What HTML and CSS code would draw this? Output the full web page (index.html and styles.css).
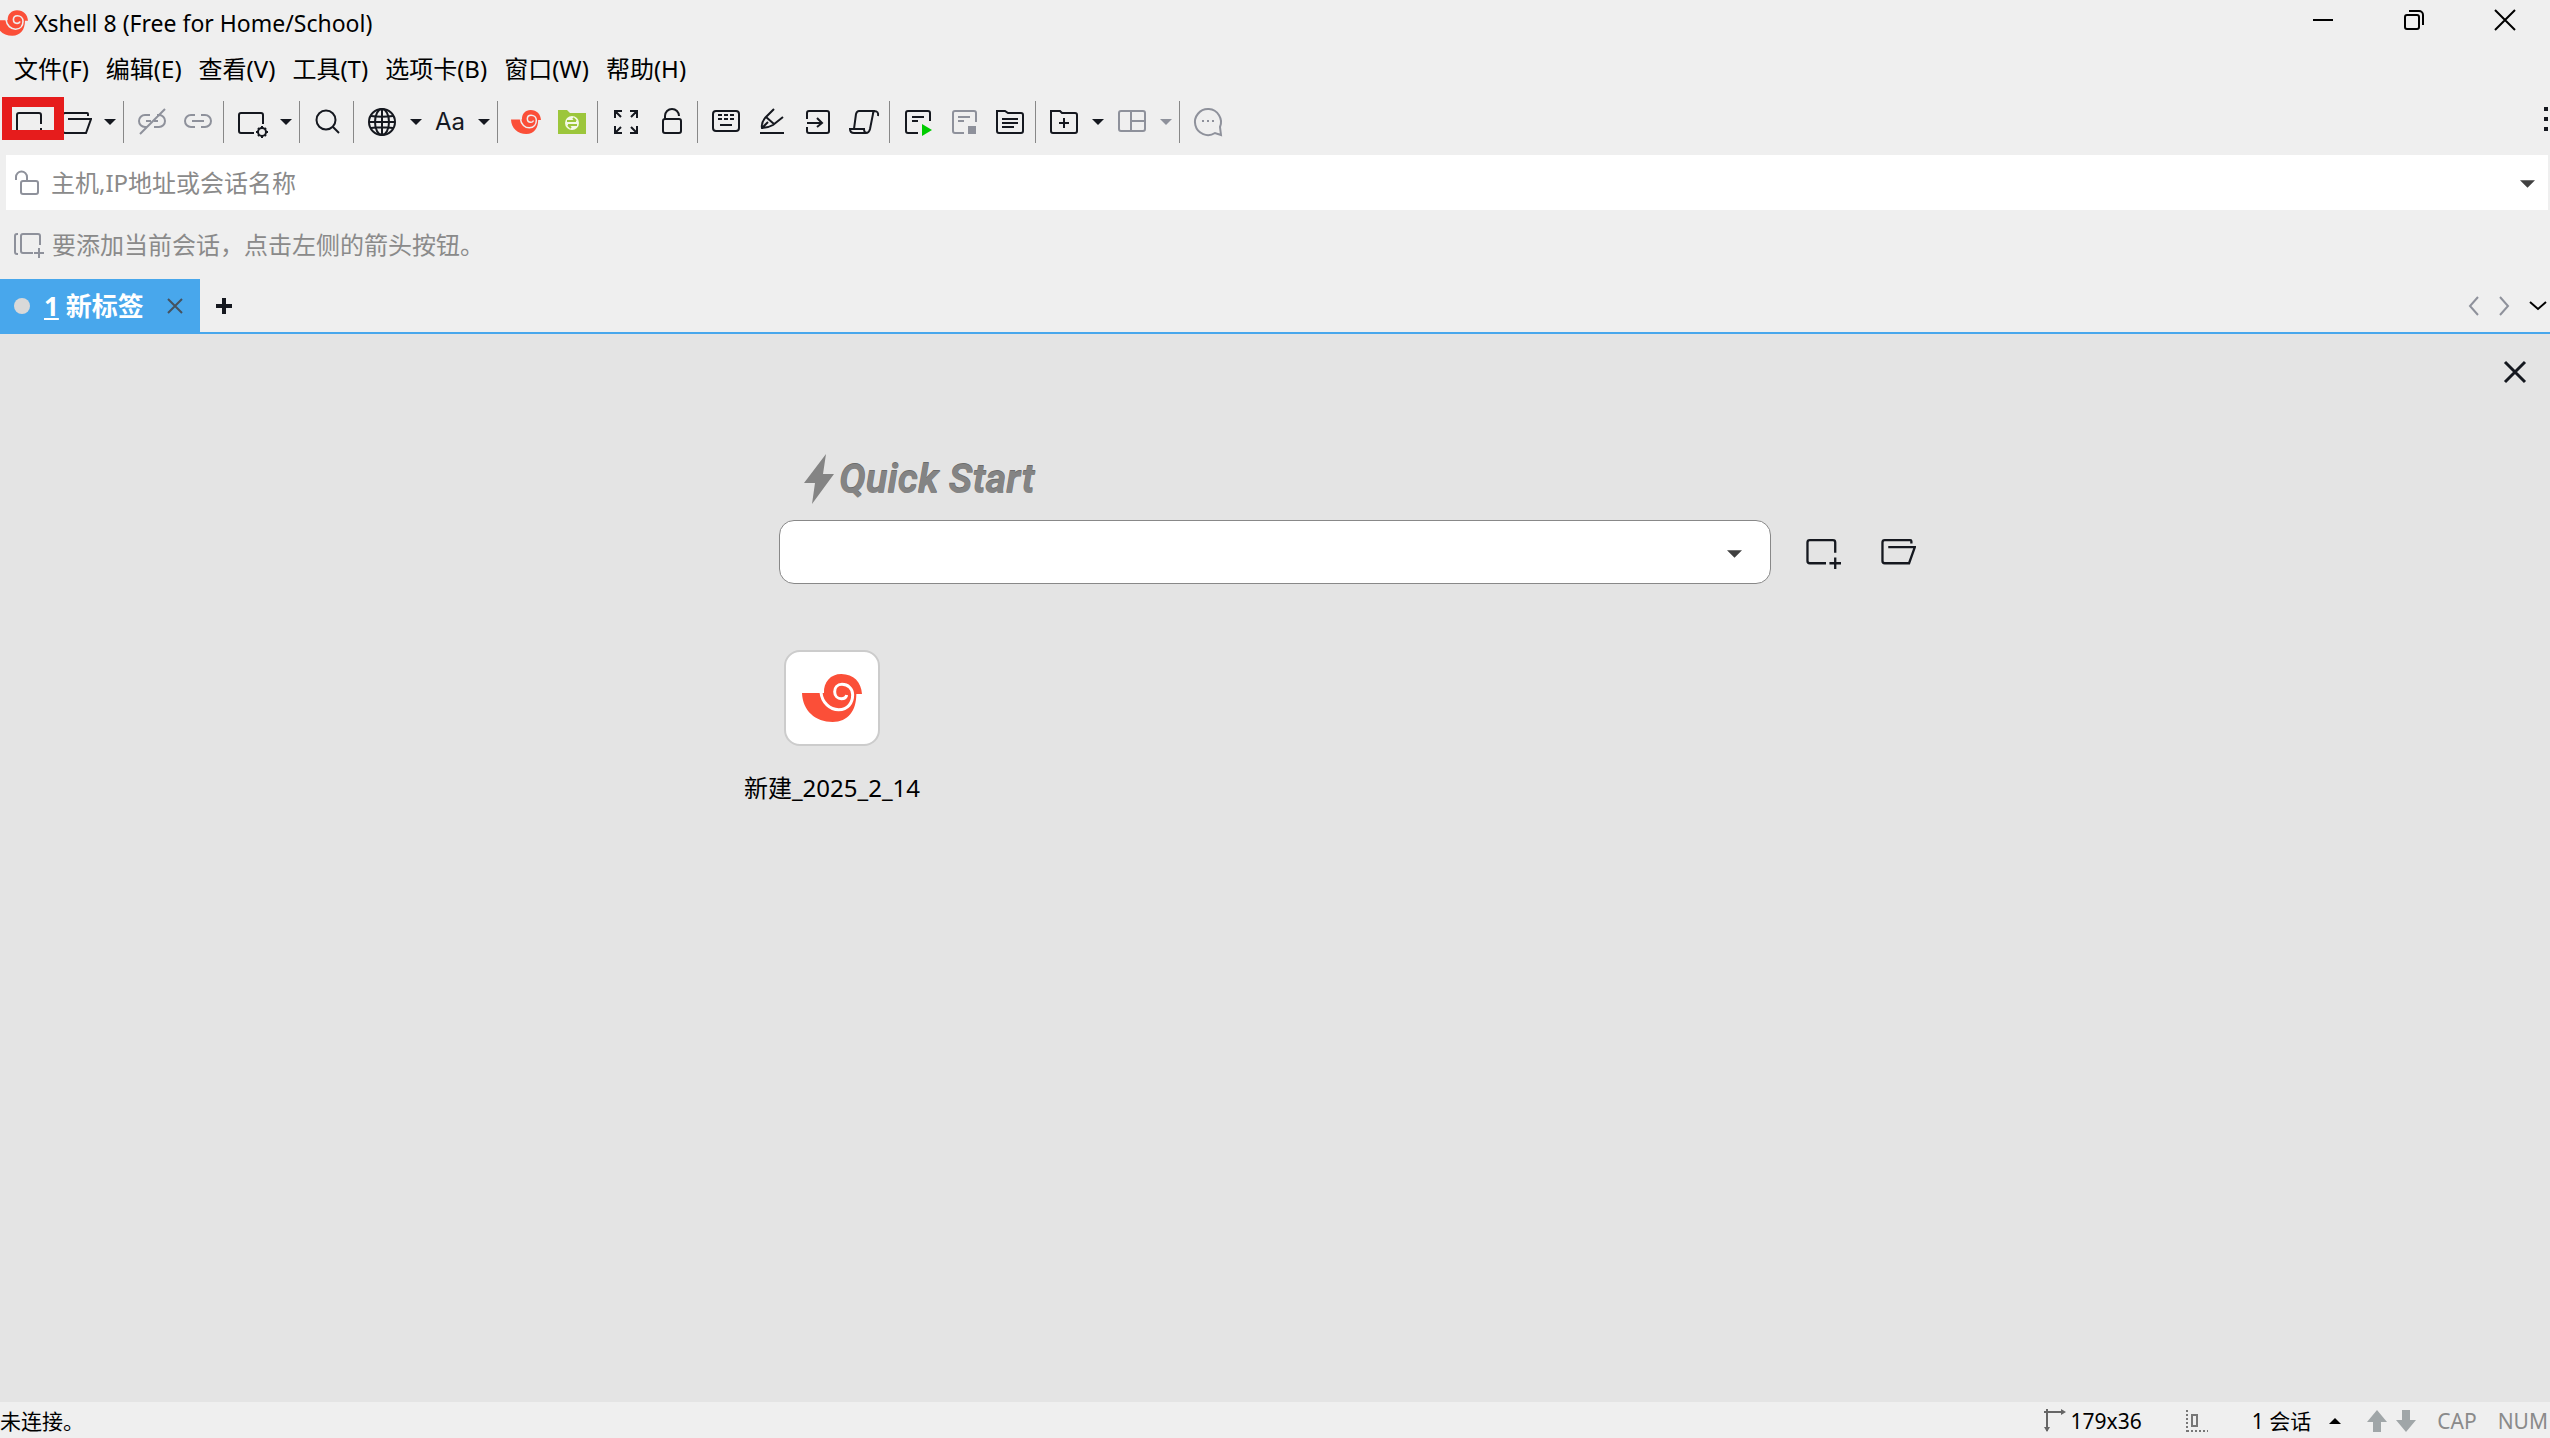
FILE: index.html
```html
<!DOCTYPE html>
<html lang="zh-CN">
<head>
    <meta charset="UTF-8">
    <meta name="viewport" content="width=device-width, initial-scale=1.0">
    <title>Xshell 8 (Free for Home/School)</title>
    <link rel="stylesheet" href="styles.css">
</head>
<body>
    <!-- shared icons -->
    <svg class="defs" aria-hidden="true">
        <symbol id="shell" viewBox="0 0 180 144">
            <path fill="#fb4f38" d="M0 57H66C64 24 86 0 118 0C155 0 178 25 180 60H163C163 110 138 144 92 144C40 144 2 110 0 57Z"/>
            <path class="shell-gap" d="M57 55C60 86 84 107 110 107C138 107 152 86 152 62C152 44 138 31 120 31C106 31 98 41 98 53C98 66 107 74 118 74C127 74 133 70 134 63"/>
        </symbol>
        <symbol id="new" viewBox="0 0 32 32">
            <path d="M19 27H5a2 2 0 0 1-2-2V9a2 2 0 0 1 2-2h20a2 2 0 0 1 2 2v9M27 22v10M22 27h10"/>
        </symbol>
        <symbol id="open" viewBox="0 0 32 32">
            <path d="M28 10V8a1 1 0 0 0-1-1H5a2 2 0 0 0-2 2v16a2 2 0 0 0 2 2h21l5-14H8"/>
        </symbol>
        <symbol id="caret" viewBox="0 0 12 6">
            <path d="M0 0H12L6 6Z" fill="currentColor" stroke="none"/>
        </symbol>
    </svg>

    <header class="title-bar">
        <svg class="app-logo"><use href="#shell"/></svg>
        <h1>Xshell 8 (Free for Home/School)</h1>
        <div class="window-buttons">
            <button aria-label="最小化"><svg viewBox="0 0 20 20"><path d="M0 10H20"/></svg></button>
            <button aria-label="还原"><svg viewBox="0 0 20 20"><rect x="1" y="5" width="14" height="14" rx="2"/><path d="M5 1h10a4 4 0 0 1 4 4v10"/></svg></button>
            <button aria-label="关闭"><svg viewBox="0 0 20 20"><path d="M0 0L20 20M20 0L0 20"/></svg></button>
        </div>
    </header>

    <nav class="menu-bar">
        <button>文件(F)</button>
        <button>编辑(E)</button>
        <button>查看(V)</button>
        <button>工具(T)</button>
        <button>选项卡(B)</button>
        <button>窗口(W)</button>
        <button>帮助(H)</button>
    </nav>

    <div class="toolbar">
        <div class="group">
            <button class="tool marked" aria-label="新建"><svg><use href="#new"/></svg></button>
            <button class="tool" aria-label="打开"><svg><use href="#open"/></svg></button>
            <button class="drop" aria-label="打开列表"><svg><use href="#caret"/></svg></button>
        </div>
        <div class="group">
            <button class="tool off" aria-label="断开"><svg viewBox="0 0 32 32"><path d="M14 9H9a6 6 0 0 0 0 12h2M21 9h2a6 6 0 0 1 0 12h-5M10 15h5M18 15h4M4 28L29 3"/></svg></button>
            <button class="tool off" aria-label="重新连接"><svg viewBox="0 0 32 32"><path d="M13 9H9a6 6 0 0 0 0 12h4M19 9h4a6 6 0 0 1 0 12h-4M10 15h12"/></svg></button>
        </div>
        <div class="group">
            <button class="tool" aria-label="属性"><svg viewBox="0 0 32 32"><path d="M18 27H5a2 2 0 0 1-2-2V9a2 2 0 0 1 2-2h20a2 2 0 0 1 2 2v9"/><circle cx="26" cy="26" r="4"/><path d="M26 20v2M26 30v2M20 26h2M30 26h2M22 22l1 1M29 29l1 1M22 30l1-1M29 23l1-1"/></svg></button>
            <button class="drop" aria-label="属性列表"><svg><use href="#caret"/></svg></button>
        </div>
        <div class="group">
            <button class="tool" aria-label="查找"><svg viewBox="0 0 32 32"><circle cx="14" cy="14" r="9.5"/><path d="M21 21l6 6"/></svg></button>
        </div>
        <div class="group">
            <button class="tool" aria-label="编码"><svg viewBox="0 0 32 32"><circle cx="16" cy="16" r="13"/><ellipse cx="16" cy="16" rx="7" ry="13"/><path d="M16 3v26M3 16h26M5 10c7 1 15 1 22 0M5 22c7-1 15-1 22 0"/></svg></button>
            <button class="drop" aria-label="编码列表"><svg><use href="#caret"/></svg></button>
            <button class="tool font-tool">Aa</button>
            <button class="drop" aria-label="字体列表"><svg><use href="#caret"/></svg></button>
        </div>
        <div class="group">
            <button class="tool" aria-label="Xshell"><svg class="shell-tool"><use href="#shell"/></svg></button>
            <button class="tool" aria-label="文件传输"><svg viewBox="0 0 32 32"><g stroke="none"><path d="M2 4h9l3 3h16v21H2Z" fill="#9cc63b"/><circle cx="16" cy="17" r="7" fill="#f4f9e6"/></g><g stroke="#9cc63b" stroke-width="2"><path d="M11 15h9M17 12l3 3M21 19h-9M15 22l-3-3"/></g></svg></button>
        </div>
        <div class="group">
            <button class="tool" aria-label="全屏"><svg viewBox="0 0 32 32"><path d="M5 12V5h7M20 5h7v7M27 20v7h-7M12 27H5v-7M5 5l6 6M27 5l-6 6M27 27l-6-6M5 27l6-6"/></svg></button>
            <button class="tool" aria-label="锁定屏幕"><svg viewBox="0 0 32 32"><rect x="7" y="13" width="18" height="14" rx="2"/><path d="M9 13V10a7 7 0 0 1 14 0"/></svg></button>
        </div>
        <div class="group">
            <button class="tool" aria-label="虚拟键盘"><svg viewBox="0 0 32 32"><rect x="3" y="5" width="26" height="20" rx="3"/><path d="M8 9h4M14 9h4M20 9h4M8 13h4M14 13h4M20 13h4M10 19h12"/></svg></button>
            <button class="tool" aria-label="突出显示"><svg viewBox="0 0 32 32"><path d="M4 27h24M18 3L9 12Q5 17 6 22Q12 22 17 19L27 11M10 11L18 18M6 22l6-6"/></svg></button>
            <button class="tool" aria-label="发送"><svg viewBox="0 0 32 32"><path d="M5 13V7a2 2 0 0 1 2-2h18a2 2 0 0 1 2 2v18a2 2 0 0 1-2 2H7a2 2 0 0 1-2-2v-4M5 17h14M15 12l5 5-5 4"/></svg></button>
            <button class="tool" aria-label="脚本"><svg viewBox="0 0 32 32"><path d="M30 10q1-5-4-5H11q-2 0-3 3L6 23H2q0 4 4 4h12q3 0 4-4l3-15q0-3 2-3M6 23h10q0 4 3 4"/></svg></button>
        </div>
        <div class="group">
            <button class="tool" aria-label="运行脚本"><svg viewBox="0 0 32 32"><path d="M16 27H6a2 2 0 0 1-2-2V7a2 2 0 0 1 2-2h20a2 2 0 0 1 2 2v8M10 11h12M10 15h6"/><path d="M20 18v12l10-6Z" fill="#0c0" stroke="none"/></svg></button>
            <button class="tool off" aria-label="停止脚本"><svg viewBox="0 0 32 32"><path d="M16 27H7a2 2 0 0 1-2-2V7a2 2 0 0 1 2-2h19a2 2 0 0 1 2 2v9M10 11h12M10 15h6"/><path d="M20 20h8v8h-8Z" fill="currentColor" stroke="none"/></svg></button>
            <button class="tool" aria-label="日志"><svg viewBox="0 0 32 32"><path d="M3 25V5h8l3 2h13a2 2 0 0 1 2 2v16a2 2 0 0 1-2 2H5a2 2 0 0 1-2-2ZM8 13h16M8 17h16M8 21h12"/></svg></button>
        </div>
        <div class="group">
            <button class="tool" aria-label="新建组"><svg viewBox="0 0 32 32"><path d="M3 25V5h9l2 2h13a2 2 0 0 1 2 2v16a2 2 0 0 1-2 2H5a2 2 0 0 1-2-2ZM16 12v10M11 17h10"/></svg></button>
            <button class="drop" aria-label="组列表"><svg><use href="#caret"/></svg></button>
            <button class="tool off" aria-label="布局"><svg viewBox="0 0 32 32"><rect x="3" y="5" width="26" height="20" rx="2"/><path d="M15 5v20M15 15h14"/></svg></button>
            <button class="drop off" aria-label="布局列表"><svg><use href="#caret"/></svg></button>
        </div>
        <div class="group">
            <button class="tool off" aria-label="反馈"><svg viewBox="0 0 32 32"><path d="M23 27A13 13 0 1 1 28 21L29 29ZM10 15h2M15 15h2M20 15h2"/></svg></button>
        </div>
        <button class="more" aria-label="更多"><svg viewBox="0 0 4 24"><path d="M0 0h4v4H0ZM0 10h4v4H0ZM0 20h4v4H0Z"/></svg></button>
    </div>

    <div class="address-bar">
        <svg class="lock" viewBox="0 0 24 24"><rect x="6" y="10" width="17" height="13" rx="2"/><path d="M1 9V6a5 5 0 0 1 11 0v4"/></svg>
        <input type="text" aria-label="主机" placeholder="主机,IP地址或会话名称">
        <button class="combo-arrow" aria-label="历史"><svg><use href="#caret"/></svg></button>
    </div>

    <div class="link-bar">
        <button aria-label="添加当前会话"><svg viewBox="0 0 32 26"><path d="M5 2H4a2 2 0 0 0-2 2v16a2 2 0 0 0 2 2h1M20 21H10a2 2 0 0 1-2-2V4a2 2 0 0 1 2-2h15a2 2 0 0 1 2 2v9M26 16v10M21 21h10"/></svg></button>
        <span>要添加当前会话，点击左侧的箭头按钮。</span>
    </div>

    <div class="tab-strip">
        <div class="tab">
            <span class="dot"></span>
            <span class="tab-name"><u>1</u> 新标签</span>
            <button class="tab-close" aria-label="关闭标签"><svg viewBox="0 0 14 14"><path d="M0 0L14 14M14 0L0 14"/></svg></button>
        </div>
        <button class="tab-add" aria-label="新标签"><svg viewBox="0 0 16 16"><path d="M8 0V16M0 8H16"/></svg></button>
        <div class="tab-nav">
            <button class="off" aria-label="上一个"><svg viewBox="0 0 16 18"><path d="M12 0L4 9l8 9"/></svg></button>
            <button class="off" aria-label="下一个"><svg viewBox="0 0 16 18"><path d="M4 0l8 9-8 9"/></svg></button>
            <button class="tab-list" aria-label="标签列表"><svg viewBox="0 0 16 18"><path d="M0 5l8 7 8-7"/></svg></button>
        </div>
    </div>

    <main>
        <button class="panel-close" aria-label="关闭"><svg viewBox="0 0 24 24"><path d="M2 2L22 22M22 2L2 22"/></svg></button>
        <section class="quick-start">
            <h2><svg viewBox="0 0 30 50"><path d="M22 0L0 29H11L8 50L30 20H19Z"/></svg>Quick Start</h2>
            <div class="quick-box">
                <input type="text" aria-label="Quick Start">
                <button class="combo-arrow" aria-label="会话列表"><svg><use href="#caret"/></svg></button>
            </div>
            <div class="quick-actions">
                <button aria-label="新建会话"><svg><use href="#new"/></svg></button>
                <button aria-label="打开会话"><svg><use href="#open"/></svg></button>
            </div>
            <div class="sessions">
                <button class="session">
                    <span class="tile"><svg><use href="#shell"/></svg></span>
                    <span>新建_2025_2_14</span>
                </button>
            </div>
        </section>
    </main>

    <footer class="status-bar">
        <span class="state">未连接。</span>
        <span class="size"><svg viewBox="0 0 22 24"><path d="M0 3h20M3 0v22"/><path class="solid" d="M17 0l5 3-5 3ZM0 18l3 5 3-5Z"/></svg>179x36</span>
        <svg class="select-mode" viewBox="0 0 22 22"><rect x="6" y="5" width="5" height="11"/><path stroke-dasharray="2 2" d="M1 0v22M1 21h21"/></svg>
        <button class="count">1 会话<svg><use href="#caret"/></svg></button>
        <span class="traffic">
            <svg viewBox="0 0 20 22"><path d="M10 0L20 12H14V22H6V12H0Z"/></svg>
            <svg viewBox="0 0 20 22"><path d="M10 22L0 10H6V0H14V10H20Z"/></svg>
        </span>
        <span class="key">CAP</span>
        <span class="key">NUM</span>
    </footer>
</body>
</html>
```
FILE: styles.css
```css
*, *::after {
    box-sizing: border-box;
}
body {
    margin: 0;
    min-height: 100vh;
    display: flex;
    flex-direction: column;
    overflow-x: hidden;
    background: #efefef;
    color: #000;
    font-family: "Noto Sans", "Noto Sans CJK SC", sans-serif;
    font-size: 24px;
    line-height: 32px;
}
button, input {
    font: inherit;
    color: inherit;
    border: none;
    background: none;
    padding: 0;
}
button {
    display: flex;
    align-items: center;
    justify-content: center;
    cursor: pointer;
}
input {
    outline: none;
}
svg {
    flex: none;
    fill: none;
    stroke: currentColor;
    stroke-width: 2px;
    overflow: visible;
}
.defs {
    position: absolute;
    width: 0;
    height: 0;
}
.shell-gap {
    stroke: var(--gap, #efefef);
    stroke-width: 9px;
}
#shell path:first-child {
    stroke: none;
}

/* title and menu */
.title-bar {
    display: flex;
    align-items: center;
    height: 46px;
}
.app-logo {
    width: 32px;
    height: 26px;
    margin-left: -4px;
}
.title-bar h1 {
    margin: 0 0 0 6px;
    font-size: 23px;
    font-weight: 400;
}
.window-buttons {
    display: flex;
    align-self: flex-start;
    margin-left: auto;
}
.window-buttons button {
    width: 91px;
    height: 40px;
}
.window-buttons svg {
    width: 20px;
    height: 20px;
}
.menu-bar {
    display: flex;
    gap: 17px;
    height: 46px;
    padding-left: 14px;
}

/* toolbar */
.toolbar {
    display: flex;
    align-items: center;
    height: 60px;
    margin-bottom: 3px;
    padding-left: 7px;
    color: #15181f;
}
.group {
    display: flex;
    align-items: center;
    height: 42px;
}
.group + .group {
    margin-left: 2px;
    padding-left: 5px;
    border-left: 1px solid #888;
}
.tool {
    width: 46px;
    height: 42px;
}
.tool svg {
    width: 32px;
    height: 32px;
}
.tool .shell-tool {
    width: 30px;
    height: 24px;
}
.font-tool {
    font-family: Inter, sans-serif;
}
.drop {
    width: 22px;
    height: 42px;
}
.drop svg {
    width: 12px;
    height: 6px;
}
.off {
    color: #8e919b;
}
.marked {
    position: relative;
}
.marked::after {
    content: "";
    position: absolute;
    left: -5px;
    top: -4px;
    width: 62px;
    height: 43px;
    border: 10px solid #e61c1c;
    z-index: 1;
}
.more {
    margin: 0 2px 6px auto;
}
.more svg {
    width: 4px;
    height: 24px;
    fill: currentColor;
    stroke: none;
}

/* address and link bars */
.address-bar {
    display: flex;
    align-items: center;
    height: 55px;
    margin: 0 2px 0 6px;
    padding: 0 13px 0 9px;
    background: #fff;
    color: #8a8a8a;
}
.lock {
    width: 24px;
    height: 24px;
    margin-right: 12px;
    color: #8e919b;
}
.address-bar input {
    flex: 1;
    min-width: 0;
}
.address-bar input::placeholder {
    color: #8a8a8a;
}
.combo-arrow {
    padding-top: 3px;
    color: #404040;
}
.combo-arrow svg {
    width: 15px;
    height: 8px;
}
.link-bar {
    display: flex;
    align-items: center;
    gap: 7px;
    height: 69px;
    padding-left: 13px;
    color: #8a8a8a;
}
.link-bar svg {
    width: 32px;
    height: 26px;
    color: #8e919b;
}

/* tabs */
.tab-strip {
    display: flex;
    height: 55px;
    border-bottom: 2px solid #48a7ec;
}
.tab {
    display: flex;
    align-items: center;
    width: 200px;
    padding: 0 18px 0 14px;
    background: #48a7ec;
    color: #fff;
}
.dot {
    width: 16px;
    height: 16px;
    margin-right: 14px;
    border-radius: 50%;
    background: #d9d9d9;
}
.tab-name {
    font-size: 26px;
    font-weight: 700;
    white-space: nowrap;
}
.tab-close {
    margin-left: auto;
    color: #46525e;
}
.tab-close svg {
    width: 14px;
    height: 14px;
}
.tab-add {
    width: 48px;
    color: #15181f;
}
.tab-add svg {
    width: 16px;
    height: 16px;
    stroke-width: 4px;
}
.tab-nav {
    display: flex;
    gap: 14px;
    margin-left: auto;
    padding-right: 4px;
}
.tab-nav svg {
    width: 16px;
    height: 18px;
}
.tab-list {
    margin-left: 4px;
}

/* quick start panel */
main {
    flex: 1;
    display: flex;
    flex-direction: column;
    background: #e4e4e4;
    --gap: #fff;
}
.panel-close {
    align-self: flex-end;
    margin: 26px 23px 0 0;
    color: #15181f;
}
.panel-close svg {
    width: 24px;
    height: 24px;
    stroke-width: 3px;
}
.quick-start {
    display: grid;
    grid-template-columns: 1fr minmax(0, 992px) 1fr;
    margin-top: 66px;
}
.quick-start h2 {
    grid-column: 2;
    display: flex;
    align-items: center;
    gap: 5px;
    margin: 0 0 12px;
    padding-left: 25px;
    height: 58px;
    color: #848484;
    font: italic 700 40px Roboto, sans-serif;
    text-shadow: 0 -1px #6c6c6c;
}
.quick-start h2 svg {
    width: 30px;
    height: 50px;
    fill: #848484;
    stroke: none;
}
.quick-box {
    grid-column: 2;
    display: flex;
    height: 64px;
    padding: 0 28px 0 16px;
    border: 1px solid #888;
    border-radius: 15px;
    background: #fff;
}
.quick-box input {
    flex: 1;
    min-width: 0;
}
.quick-actions {
    display: flex;
    gap: 38px;
    padding: 0 0 4px 33px;
    color: #15181f;
}
.quick-actions svg {
    width: 37px;
    height: 37px;
}
.sessions {
    grid-column: 2;
    display: flex;
    margin-top: 66px;
}
.session {
    flex-direction: column;
    gap: 26px;
    width: 106px;
    white-space: nowrap;
}
.tile {
    display: flex;
    align-items: center;
    justify-content: center;
    width: 96px;
    height: 96px;
    border: 2px solid #ccc;
    border-radius: 16px;
    background: #fff;
}
.tile svg {
    width: 60px;
    height: 48px;
}

/* status bar */
.status-bar {
    display: flex;
    align-items: center;
    height: 36px;
    padding: 2px 2px 0 0;
    font-size: 21px;
    white-space: nowrap;
}
.state {
    margin-right: auto;
}
.size {
    display: flex;
    align-items: center;
    gap: 5px;
    margin-right: 44px;
}
.size svg {
    width: 22px;
    height: 24px;
    color: #666;
}
.solid {
    fill: currentColor;
    stroke: none;
}
.select-mode {
    width: 22px;
    height: 22px;
    margin-right: 44px;
    color: #777;
}
.count {
    gap: 18px;
    margin-right: 26px;
}
.count svg {
    width: 12px;
    height: 6px;
    transform: rotate(180deg);
}
.traffic {
    display: flex;
    gap: 9px;
    margin-right: 21px;
}
.traffic svg {
    width: 20px;
    height: 22px;
    fill: #a0a6a8;
    stroke: none;
}
.key {
    color: #8a8a8a;
}
.key + .key {
    margin-left: 21px;
}
```
